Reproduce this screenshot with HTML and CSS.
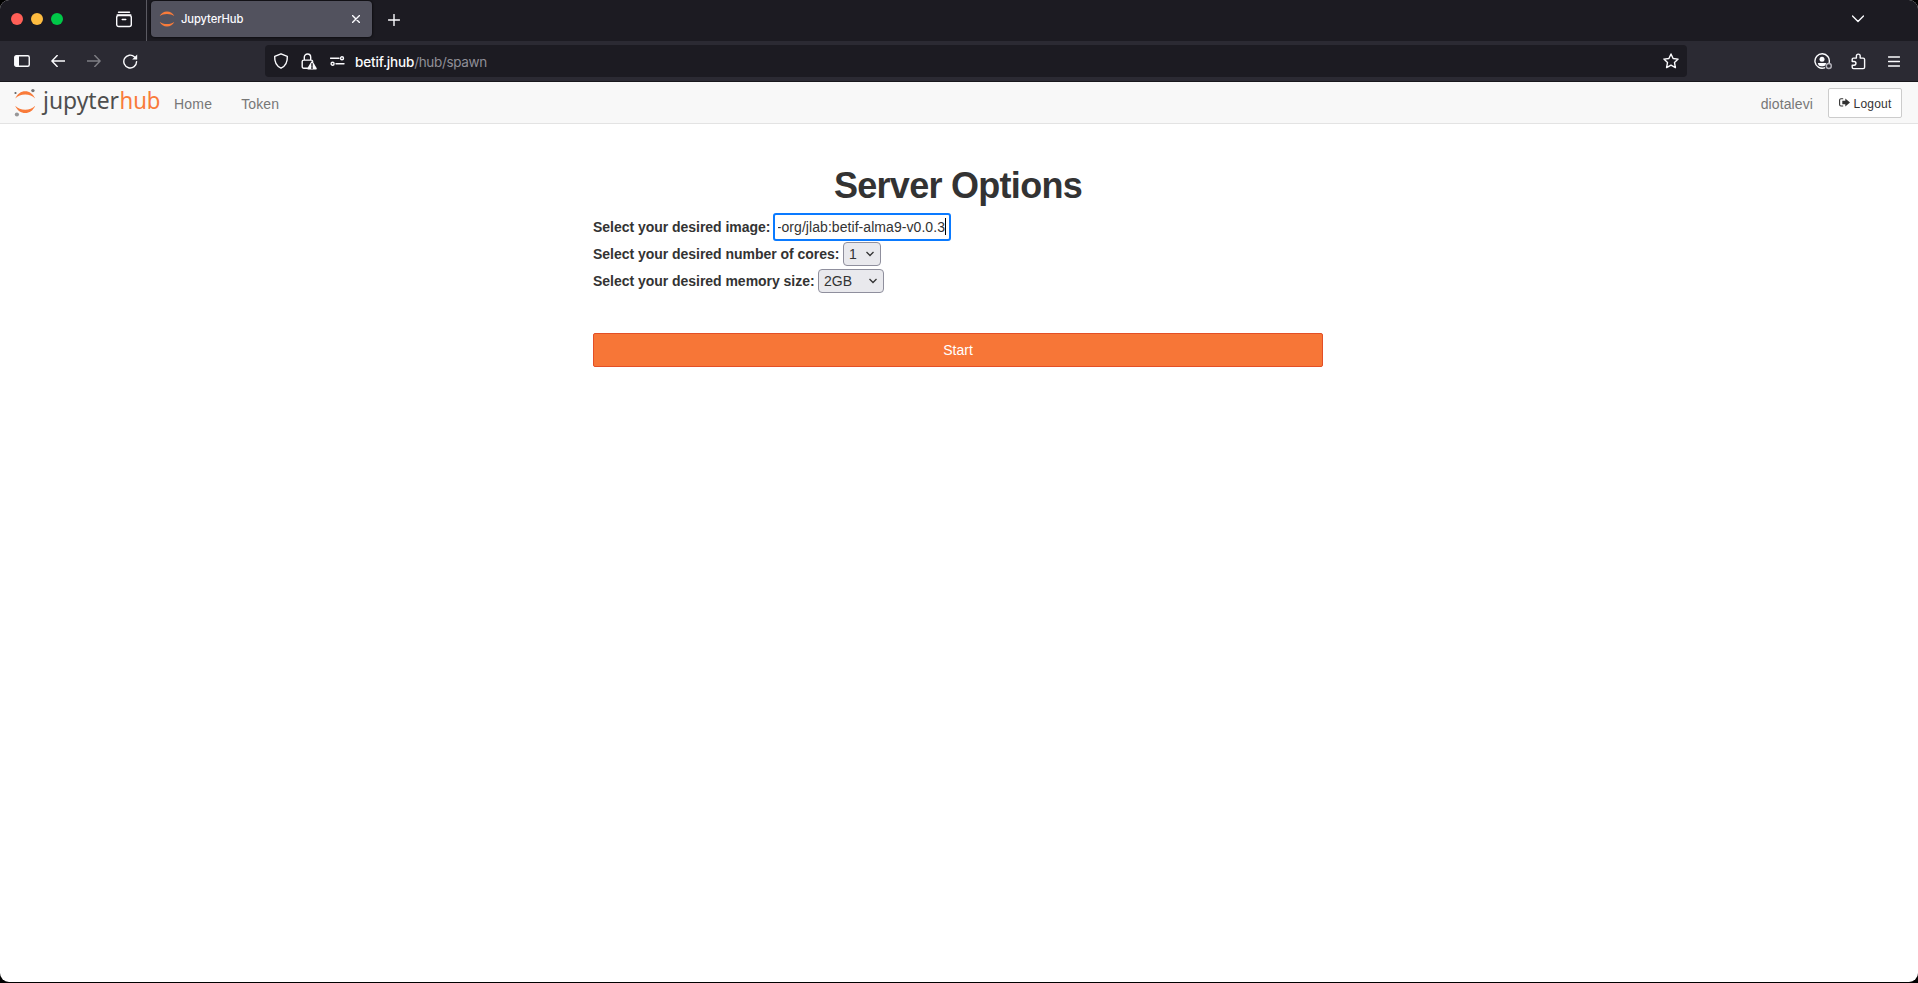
FILE: index.html
```html
<!DOCTYPE html>
<html lang="en">
<head>
<meta charset="utf-8">
<title>JupyterHub</title>
<link rel="stylesheet" href="styles.css">
</head>
<body>
<div class="window">
  <header class="tabbar">
    <div class="lights"><i class="red"></i><i class="yellow"></i><i class="green"></i></div>
    <svg class="icon archive" width="18" height="18" viewBox="0 0 18 18"><path d="M3.5 1.2h11M2.2 4h13.6"/><rect x="1.7" y="4.5" width="14.6" height="11" rx="2"/><path d="M7.2 8.5h3.6"/></svg>
    <div class="tab">
      <svg width="16" height="16" viewBox="0 0 16 16" fill="#f97b3a"><path d="M.6 5.2C2 2 4.8.4 8 .4s6 1.600 7.400 4.800C13.500 3.700 11 2.900 8 2.900s-5.500.8-7.400 2.300zM.6 10.800C2 14 4.800 15.600 8 15.600s6-1.600 7.400-4.800c-1.900 1.500-4.400 2.300-7.400 2.300s-5.500-.8-7.400-2.300z"/></svg>
      <span class="tab-title">JupyterHub</span>
      <svg class="icon" width="8" height="8" viewBox="0 0 8 8"><path d="M.4.4l7.200 7.200M7.600.4L.4 7.600"/></svg>
    </div>
    <svg class="icon plus" width="12" height="12" viewBox="0 0 12 12"><path d="M6 .5v11M.5 6h11"/></svg>
    <svg class="icon chevron" width="12" height="8" viewBox="0 0 12 8"><path d="M.5 1L6 6.500 11.500 1"/></svg>
  </header>

  <div class="toolbar">
    <svg class="icon sidebar" width="16" height="12" viewBox="0 0 16 12"><rect x=".75" y=".75" width="14.500" height="10.500" rx="1.500"/><path d="M1 1h4v10H1z" fill="#fbfbfe" stroke="none"/></svg>
    <svg class="icon back" width="14" height="12" viewBox="0 0 14 12"><path d="M14 6H1M6.200.6L.9 6l5.300 5.400"/></svg>
    <svg class="icon forward" width="14" height="12" viewBox="0 0 14 12"><path d="M0 6h13M7.800.6L13.100 6l-5.300 5.400"/></svg>
    <svg class="icon reload" width="15" height="15" viewBox="0 0 15 15"><path d="M13.600 7.600a6.400 6.400 0 1 1-2-4.700l1.600 1.600"/><path d="M14.200.6v5H9.200z" fill="#fbfbfe" stroke="none"/></svg>
    <div class="urlbar">
      <svg class="icon" width="16" height="16" viewBox="0 0 15 16"><path d="M7.500.8l6.300 2.600c.3 5-1.300 9.500-6.300 11.800C2.500 12.900.9 8.400 1.200 3.400z"/></svg>
      <svg class="icon lock" width="16" height="17" viewBox="0 0 16 17"><path d="M3.300 7V4.200a3.200 3.200 0 0 1 6.400 0V7M6.500 15.300H2.700a1.500 1.500 0 0 1-1.500-1.500V8.600c0-.9.600-1.500 1.500-1.500h7.600c.9 0 1.300.5 1.400 1.300"/><path d="M11 8.300c.4 0 .7.200.9.500l3.700 6.200c.4.800 0 1.500-.8 1.500H7.300c-.8 0-1.200-.7-.8-1.500l3.700-6.200c.2-.3.4-.5.800-.5z" fill="#fbfbfe" stroke="none"/><path d="M11 10.800v2.500M11 14.200v1.200" stroke="#1c1b22"/></svg>
      <svg class="icon perms" width="15" height="10" viewBox="0 0 15 10"><path d="M.5 2.200h8.500M6 7.700h8"/><circle cx="12" cy="2.200" r="1.500"/><circle cx="2.600" cy="7.700" r="1.500"/></svg>
      <span class="url"><b>betif.jhub</b>/hub/spawn</span>
      <svg class="icon star" width="16" height="16" viewBox="0 0 16 16"><path d="M8 1l2.100 4.500 5 .6-3.600 3.500.9 5L8 12.200l-4.400 2.400.9-5L.9 6.100l5-.6z"/></svg>
    </div>
    <svg class="icon account" width="19" height="17" viewBox="0 0 19 17"><path d="M10.500 14.800A7.200 7.200 0 1 1 15.200 9.500"/><circle cx="8" cy="6.200" r="2.500" fill="#fbfbfe" stroke="none"/><path d="M3.800 10h8.400l-.8 2.200c-1.500 1.500-5.300 1.500-6.800 0z" fill="#fbfbfe" stroke="none"/><circle cx="14.800" cy="13" r="2.500" stroke="#b3b2ba"/></svg>
    <svg class="icon puzzle" width="15" height="17" viewBox="0 0 15 17"><path d="M1.200 8V6.300c0-.8.500-1.200 1.200-1.200h3V3a1.900 1.900 0 0 1 3.800 0v2.100h3c.9 0 1.400.5 1.400 1.300v7.800c0 .9-.5 1.400-1.400 1.400H2.600c-.9 0-1.400-.5-1.400-1.400v-2h1.900a1.800 1.800 0 0 0 0-3.700H1.200z"/></svg>
    <svg class="icon menu" width="12" height="11" viewBox="0 0 12 11"><path d="M.5 1h11M.5 5.500h11M.5 10h11"/></svg>
  </div>

  <nav class="navbar">
    <svg class="logo" width="148" height="32" viewBox="0 0 148 32">
      <path fill="#f97b3a" d="M1.200 10.500C3.200 5.800 7 3.200 11.200 3.200s8 2.600 10 7.300C18.500 7.800 15.200 6.500 11.200 6.500S3.900 7.800 1.200 10.500zM1.200 17.800c2 4.700 5.800 7.300 10 7.300s8-2.600 10-7.300c-2.700 2.700-6 4-10 4s-7.300-1.300-10-4z"/>
      <circle cx="1.500" cy="5" r="1.100" fill="#616262"/><circle cx="18.900" cy="2.600" r="1.700" fill="#767677"/><circle cx="2.900" cy="26.500" r="2.100" fill="#989798"/>
      <text class="word" x="29" y="20.500" textLength="76" lengthAdjust="spacingAndGlyphs">jupyter</text>
      <text class="word hub" x="105.500" y="20.500" textLength="41" lengthAdjust="spacingAndGlyphs">hub</text>
    </svg>
    <a class="home">Home</a>
    <a class="token">Token</a>
    <span class="user">diotalevi</span>
    <a class="logout"><svg width="11" height="9" viewBox="0 0 11 9"><path d="M4.200.8H2A1.400 1.400 0 0 0 .6 2.200v4.400A1.400 1.400 0 0 0 2 8h2.200" fill="none" stroke="#333" stroke-width="1.100"/><path d="M3.300 2.800h3V.5L11 4.500l-4.700 4V6.200h-3z" fill="#333"/></svg><span>Logout</span></a>
  </nav>

  <main class="content">
    <h1>Server Options</h1>
    <div class="row"><label class="l1">Select your desired image:</label><div class="image-field"><div class="value">-org/jlab:betif-alma9-v0.0.3</div><i class="caret"></i></div></div>
    <div class="row"><label class="l2">Select your desired number of cores:</label><div class="select cores"><span>1</span><svg width="8" height="6" viewBox="0 0 8 6"><path d="M.5 1L4 4.500 7.500 1"/></svg></div></div>
    <div class="row memory-row"><label class="l3">Select your desired memory size:</label><div class="select memory"><span>2GB</span><svg width="8" height="6" viewBox="0 0 8 6"><path d="M.5 1L4 4.500 7.500 1"/></svg></div></div>
    <div class="start">Start</div>
  </main>
</div>
</body>
</html>
```
FILE: styles.css
```css
* { box-sizing: border-box; }
body { margin: 0; background: #000; font-family: "Liberation Sans", Arial, sans-serif; font-size: 14px; color: #333; }
.window { height: 982px; background: #fff; border-radius: 9px; overflow: hidden; }
svg { flex: none; display: block; }
.icon { fill: none; stroke: #fbfbfe; stroke-width: 1.4; stroke-linecap: round; stroke-linejoin: round; }

.tabbar { height: 41px; background: #1c1b22; display: flex; align-items: flex-start; }
.lights { display: flex; gap: 8px; padding: 13px 0 0 11px; width: 116px; }
.lights i { width: 12px; height: 12px; border-radius: 50%; }
.red { background: #ff5f57; }
.yellow { background: #febc40; }
.green { background: #00c848; }
.archive { margin-top: 11px; margin-left: -1px; }
.tab { width: 221px; height: 36px; margin: 1px 0 0 18px; background: #52525e; border-radius: 4px; display: flex; align-items: center; padding: 0 12px 0 8px; box-shadow: 0 0 3px #000; position: relative; }
.tab::before { content: ""; position: absolute; left: -5px; top: -1px; width: 1px; height: 41px; background: #5b5a62; }
.tab-title { color: #fbfbfe; font: 500 11.2px Inter, sans-serif; letter-spacing: -.1px; margin: 0 auto 0 6px; }
.plus { margin: 14px 0 0 16px; }
.chevron { margin: 15px 54px 0 auto; }

.toolbar { height: 41px; background: #2b2a33; display: flex; align-items: center; border-bottom: 1px solid #18171c; }
.sidebar { margin-left: 14px; }
.back { margin-left: 21px; }
.forward { margin-left: 22px; opacity: .4; }
.reload { margin-left: 22px; }
.urlbar { width: 1422px; height: 32px; margin-left: 127px; background: #1c1b22; border-radius: 4px; display: flex; align-items: center; padding: 0 8px; }
.lock { margin-left: 12px; }
.perms { margin-left: 13px; }
.url { margin: 1px 0 0 10px; font: 13.5px Inter, sans-serif; letter-spacing: -.35px; color: #8f8e97; }
.url b { font-weight: 500; letter-spacing: -.15px; color: #fbfbfe; }
.star { margin-left: auto; }
.account { margin-left: 127px; }
.puzzle { margin-left: 18px; }
.menu { margin-left: 22px; }

.navbar { height: 42px; background: #f8f8f8; border-bottom: 1px solid #e3e3e3; display: flex; align-items: center; color: #777; padding-right: 16px; }
.logo { margin: 6px 0 0 14px; overflow: visible; align-self: flex-start; }
.word { font: 24px "Noto Sans", "Open Sans", sans-serif; fill: #4e4e4e; }
.word.hub { fill: #f97b3a; }
.home, .token, .user { padding-top: 2px; }
.home { margin-left: 12px; letter-spacing: .2px; }
.token { margin-left: 29px; letter-spacing: .1px; }
.user { margin-left: auto; letter-spacing: .1px; }
.logout { width: 74px; height: 30px; margin-left: 15px; border: 1px solid #ccc; border-radius: 2px; background: #fff; color: #333; font-size: 12px; letter-spacing: .2px; display: flex; align-items: center; justify-content: center; gap: 4px; }
.logout span { padding-top: 2px; }

.content { width: 730px; margin: 41px 0 0 593px; }
h1 { margin: 0; font-size: 36px; line-height: 42px; text-align: center; letter-spacing: -.72px; }
.row { height: 27px; display: flex; align-items: center; }
h1 + .row { margin-top: 6px; }
label { font-weight: bold; white-space: nowrap; letter-spacing: -.03px; }
.memory-row label, .memory-row span { padding-top: 1px; }
.l1 { width: 180px; }
.l2 { width: 250px; }
.l3 { width: 225px; }
.image-field { width: 178px; height: 28px; border: 2px solid #0a7aff; border-radius: 3px; display: flex; align-items: center; padding: 0 3px; }
.value { flex: 1; min-width: 0; overflow: hidden; white-space: nowrap; display: flex; justify-content: flex-end; letter-spacing: .06px; }
.caret { width: 1px; height: 17px; background: #000; }
.select { height: 24px; border: 1px solid #8f8f9d; border-radius: 4px; background: #e9e9ed; display: flex; align-items: center; justify-content: space-between; padding: 0 6px 0 5px; }
.select svg { fill: none; stroke: #333; stroke-width: 1.3; }
.cores { width: 38px; }
.memory { width: 66px; }
.start { height: 34px; margin-top: 39px; border: 1px solid #e34f26; border-radius: 2px; background: #f77637; color: #fff; display: flex; align-items: center; justify-content: center; }
```
